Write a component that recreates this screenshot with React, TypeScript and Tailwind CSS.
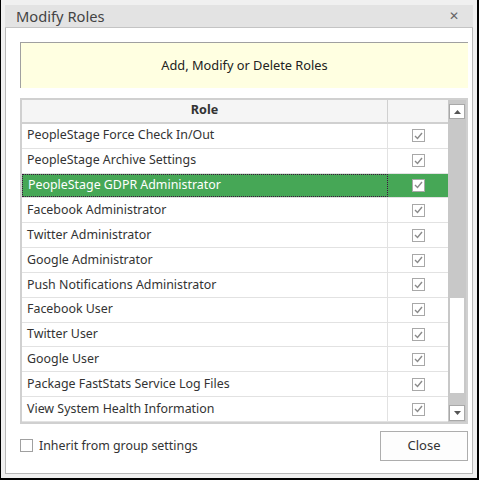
import React from "react";

const rows = [
  "PeopleStage Force Check In/Out",
  "PeopleStage Archive Settings",
  "PeopleStage GDPR Administrator",
  "Facebook Administrator",
  "Twitter Administrator",
  "Google Administrator",
  "Push Notifications Administrator",
  "Facebook User",
  "Twitter User",
  "Google User",
  "Package FastStats Service Log Files",
  "View System Health Information",
];

function Check() {
  return (
    <div className="w-[13px] h-[13px] border border-[#a8a8a8] bg-white flex items-center justify-center">
      <svg width="9" height="8" viewBox="0 0 9 8">
        <path d="M1 4 L3.5 6.5 L8 1" fill="none" stroke="#8a8a8a" strokeWidth="1.4" />
      </svg>
    </div>
  );
}

export default function App() {
  return (
    <div
      className="w-[479px] h-[480px] bg-[#f0f0f0] border-l border-r-2 border-b-2 border-black pl-[4px] pr-[4px] pt-[5px] pb-[4px] flex flex-col"
      style={{ fontFamily: '"Noto Sans", "Open Sans", sans-serif' }}
    >
      <div className="h-[23px] bg-[#e3e3e3] flex items-center justify-between pl-[11px] pr-[14px] border-b border-[#c4c4c4]">
        <span className="text-[14.7px] text-[#444]">Modify Roles</span>
        <span className="text-[12px] text-[#666]">✕</span>
      </div>
      <div className="flex-1 bg-white border-l border-r border-b border-[#b8b8b8] pl-[14px] pr-[4px] pt-[14px] flex flex-col">
        <div className="h-[46px] bg-[#ffffe1] border-t border-l border-[#a0a0a0] flex items-center justify-center text-[12.8px] text-[#222]">
          Add, Modify or Delete Roles
        </div>
        <div className="mt-[10px] h-[326px] border-2 border-[#d0d0d0] flex">
          <div className="flex-1 flex flex-col">
            <div className="h-[24px] bg-[#f5f5f5] flex border-b-2 border-[#d0d0d0]">
              <div className="w-[366px] border-r border-[#d0d0d0] flex items-center justify-center text-[12.6px] font-bold text-[#333]">
                Role
              </div>
              <div className="flex-1" />
            </div>
            {rows.map((r, i) => {
              const sel = i === 2;
              return (
                <div
                  key={r}
                  className={`h-[25px] flex border-b border-[#e2e2e2] ${sel ? "bg-[#46a756]" : "bg-white"}`}
                >
                  <div
                    className={`w-[366px] flex items-center pl-[5px] text-[12.4px] ${
                      sel
                        ? "text-white border border-dotted border-[#401040]"
                        : "text-[#333] border-r border-[#e2e2e2]"
                    }`}
                  >
                    {r}
                  </div>
                  <div className="flex-1 flex items-center justify-center">
                    <Check />
                  </div>
                </div>
              );
            })}
          </div>
          <div className="w-[18px] bg-[#c8c8c8] flex flex-col pt-[4px]">
            <div className="h-[15px] mx-[1px] bg-white border border-[#a8a8a8] flex items-center justify-center">
              <svg width="7" height="4" viewBox="0 0 7 4">
                <path d="M0 4 L3.5 0 L7 4 Z" fill="#555" />
              </svg>
            </div>
            <div className="h-[178px]" />
            <div className="h-[97px] mx-[1px] bg-white border border-[#c8c8c8]" />
            <div className="flex-1" />
            <div className="h-[16px] mx-[1px] mb-[1px] bg-white border border-[#a8a8a8] flex items-center justify-center">
              <svg width="7" height="4" viewBox="0 0 7 4">
                <path d="M0 0 L3.5 4 L7 0 Z" fill="#555" />
              </svg>
            </div>
          </div>
        </div>
        <div className="flex items-center justify-between mt-[7px]">
          <label className="flex items-center gap-[6px] text-[12.4px] text-[#333]">
            <span className="w-[13px] h-[13px] border border-[#a0a0a0] bg-white" />
            Inherit from group settings
          </label>
          <button className="w-[88px] h-[30px] border border-[#adadad] bg-[#fdfdfd] text-[13px] text-[#333]">
            Close
          </button>
        </div>
      </div>
    </div>
  );
}
